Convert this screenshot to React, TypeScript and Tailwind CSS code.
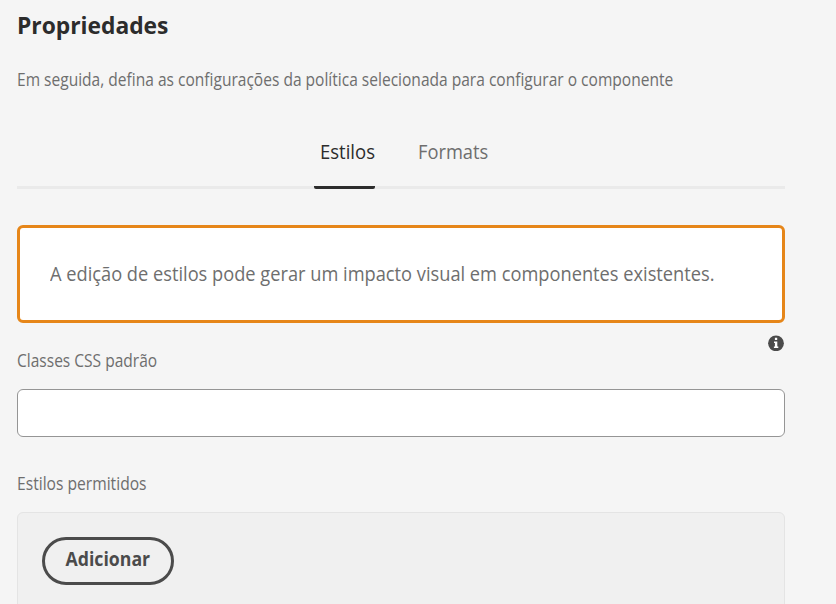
import React from "react";

export default function App() {
  return (
    <main className="h-[604px] w-[836px] overflow-hidden bg-[#f5f5f5] pr-[51px] pl-[17px] font-['Open_Sans','Noto_Sans',sans-serif] whitespace-nowrap text-[#6e6e6e]">
      <h1 className="h-[50px] pt-[9px] text-2xl leading-8 font-bold text-[#2c2c2c]">
        <span className="inline-block origin-left scale-x-[0.95]">Propriedades</span>
      </h1>
      <p className="h-[75px] pt-[17px] text-lg leading-6">
        <span className="inline-block origin-left scale-x-[0.8635]">Em seguida, defina as configurações da política selecionada para configurar o componente</span>
      </p>
      <div role="tablist" className="flex h-16 border-b-[3px] border-[#eaeaea] pl-[297px] text-xl leading-[54px]">
        <button role="tab" aria-selected="true" className="flex h-16 w-[61px] rounded-xs border-b-[3px] border-[#2c2c2c] pl-1.5 text-[#2c2c2c]">
          <span className="inline-block origin-left scale-x-[0.925]">Estilos</span>
        </button>
        <button role="tab" aria-selected="false" className="ml-[43px] flex">
          <span className="inline-block origin-left scale-x-[0.915]">Formats</span>
        </button>
      </div>
      <div role="alert" className="mt-9 flex h-[98px] items-center rounded-md border-[3px] border-[#e68619] bg-white pl-[30px] text-xl">
        <span className="inline-block origin-left scale-x-[0.912]">A edição de estilos pode gerar um impacto visual em componentes existentes.</span>
      </div>
      <div className="flex h-[66px] justify-between">
        <label htmlFor="classes" className="pt-[25px] text-lg leading-6">
          <span className="inline-block origin-left scale-x-[0.863]">Classes CSS padrão</span>
        </label>
        <svg className="mt-3 mr-px size-4 text-[#4b4b4b]" viewBox="0 0 16 16">
          <circle cx="8" cy="8.3" r="7.9" fill="currentColor" />
          <path d="M6.9 2.8h2.3v2.3H6.9zM6 6.5h3.3v5h1v1.4H5.9v-1.4h1V7.9H6z" fill="white" />
        </svg>
      </div>
      <input id="classes" className="block h-12 w-full rounded-md border border-[#959595] bg-white px-4 text-lg" />
      <h2 className="h-[75px] pt-[34px] text-lg leading-6">
        <span className="inline-block origin-left scale-x-[0.868]">Estilos permitidos</span>
      </h2>
      <section className="h-28 rounded-md border border-[#e4e4e4] bg-[#f0f0f0] pt-6 pl-6">
        <button className="flex h-12 w-[132px] items-center justify-center rounded-full border-[3px] border-[#4b4b4b] pb-1 text-xl font-bold text-[#4b4b4b]">
          <span className="inline-block scale-x-[0.885]">Adicionar</span>
        </button>
      </section>
    </main>
  );
}
